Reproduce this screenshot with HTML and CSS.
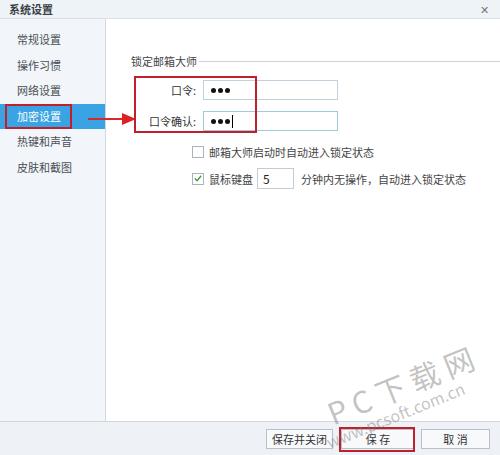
FILE: index.html
```html
<!DOCTYPE html>
<html lang="zh-CN">
<head>
    <meta charset="UTF-8">
    <title>系统设置</title>
    <link rel="stylesheet" href="styles.css">
</head>
<body>
    <div class="dialog">
        <div class="titlebar">
            <span class="title">系统设置</span>
            <span class="close">&#x2715;</span>
        </div>
        <div class="main">
            <ul class="nav">
                <li>常规设置</li>
                <li>操作习惯</li>
                <li>网络设置</li>
                <li class="active">加密设置<span class="mark"></span></li>
                <li>热键和声音</li>
                <li>皮肤和截图</li>
            </ul>
            <svg class="arrow" width="50" height="14" viewBox="0 0 50 14">
                <line x1="0" y1="7" x2="36" y2="7" stroke="#d42a2a" stroke-width="2.2"/>
                <polygon points="34,1 48,7 34,13" fill="#e02020"/>
            </svg>
            <div class="content">
                <div class="group-title"><span>锁定邮箱大师</span></div>
                <div class="fields">
                    <div class="row">
                        <label>口令:</label>
                        <div class="input"><i></i><i></i><i></i></div>
                    </div>
                    <div class="row">
                        <label>口令确认:</label>
                        <div class="input focus"><i></i><i></i><i></i><span class="caret"></span></div>
                    </div>
                    <span class="mark"></span>
                </div>
                <div class="option">
                    <span class="check"></span>
                    <span>邮箱大师启动时自动进入锁定状态</span>
                </div>
                <div class="option">
                    <span class="check on">
                        <svg width="11" height="11" viewBox="0 0 11 11"><path d="M2 5.5 L4.5 8 L9 2.5" fill="none" stroke="#3a9a3a" stroke-width="1.4"/></svg>
                    </span>
                    <span>鼠标键盘</span>
                    <div class="num">5</div>
                    <span>分钟内无操作，自动进入锁定状态</span>
                </div>
            </div>
        </div>
        <div class="footer">
            <button class="btn w1">保存并关闭</button>
            <button class="btn w2">保 存<span class="mark"></span></button>
            <button class="btn w3">取 消</button>
        </div>
        <div class="watermark">
            <div class="big">P C 下 载 网</div>
            <div class="small">www.pcsoft.com.cn</div>
        </div>
    </div>
</body>
</html>
```

FILE: styles.css
```css
* {
    box-sizing: border-box;
}

body {
    margin: 0;
    font-family: "Noto Sans CJK SC", "Noto Sans", sans-serif;
    font-size: 11px;
    color: #333;
    background: #fff;
}

.dialog {
    position: relative;
    width: 500px;
    height: 455px;
    display: flex;
    flex-direction: column;
    overflow: hidden;
}

.titlebar {
    height: 19px;
    flex: none;
    display: flex;
    align-items: center;
    justify-content: space-between;
    padding: 0 11px 0 9px;
    background: #eef3f7;
    border-bottom: 1px solid #d9dfe5;
}

.title {
    font-size: 11px;
    font-weight: bold;
    color: #3a3f45;
    line-height: 1;
}

.close {
    font-size: 11px;
    color: #777;
    line-height: 1;
}

.main {
    position: relative;
    flex: 1;
    display: flex;
    border-bottom: 1px solid #d3d7dc;
}

.nav {
    width: 106px;
    flex: none;
    margin: 0;
    padding: 8px 0 0;
    list-style: none;
    background: #f2f5f9;
    border-right: 1px solid #d3d8de;
}

.nav li {
    position: relative;
    height: 25.5px;
    line-height: 25.5px;
    padding-left: 17px;
    color: #4a4f55;
}

.nav li.active {
    background: #39a3e3;
    color: #fff;
}

.nav li .mark {
    position: absolute;
    left: 5px;
    top: 0;
    width: 67px;
    height: 25px;
    border: 2px solid #c01f2c;
}

.arrow {
    position: absolute;
    left: 88px;
    top: 93px;
}

.content {
    flex: 1;
    padding: 35px 0 0 25px;
}

.group-title {
    display: flex;
    align-items: center;
    height: 14px;
    color: #444;
}

.group-title::after {
    content: '';
    flex: 1;
    height: 1px;
    margin-left: 2px;
    background: #c9d2da;
}

.fields {
    position: relative;
    margin-top: 12px;
    display: flex;
    flex-direction: column;
    gap: 11px;
}

.row {
    display: flex;
    align-items: center;
}

.row label {
    width: 66px;
    text-align: right;
    padding-right: 1px;
    color: #333;
}

.input {
    margin-left: 6px;
    width: 135px;
    height: 20px;
    border: 1px solid #c3d0da;
    padding-left: 7px;
    display: flex;
    align-items: center;
    gap: 2px;
}

.input i {
    width: 5px;
    height: 5px;
    border-radius: 50%;
    background: #111;
}

.input.focus {
    border-color: #9ccbe0;
}

.caret {
    width: 1px;
    height: 13px;
    background: #000;
    margin-left: 0;
}

.fields .mark {
    position: absolute;
    left: 3px;
    top: -4px;
    width: 123px;
    height: 57px;
    border: 2px solid #c01f2c;
}

.option {
    display: flex;
    align-items: center;
    margin-left: 61px;
    color: #444;
}

.fields + .option {
    margin-top: 15px;
    height: 12px;
}

.option + .option {
    margin-top: 10px;
}

.check {
    width: 12px;
    height: 12px;
    border: 1px solid #aab4bd;
    background: #fff;
    margin-right: 5px;
    display: flex;
    align-items: center;
    justify-content: center;
}

.num {
    width: 37px;
    height: 21px;
    margin: 0 7px 0 4px;
    border: 1px solid #c3ccd3;
    padding-left: 5px;
    line-height: 19px;
    font-size: 12px;
    color: #222;
}

.footer {
    height: 33px;
    flex: none;
    display: flex;
    justify-content: flex-end;
    align-items: flex-start;
    padding: 7px 10px 0 0;
    background: #eef2f7;
}

.btn {
    position: relative;
    height: 20px;
    padding: 0;
    border: 1px solid #b8c1ca;
    background: #f7f9fb;
    font: inherit;
    font-size: 11px;
    color: #333;
}

.w1 { width: 67px; }
.w2 { width: 74px; margin-left: 8px; }
.w3 { width: 69px; margin-left: 6px; }

.btn .mark {
    position: absolute;
    left: -3px;
    top: -3px;
    width: 76px;
    height: 25px;
    border: 2px solid #c01f2c;
}

.watermark {
    position: absolute;
    left: 322px;
    top: 398px;
    transform: rotate(-22deg);
    transform-origin: left top;
    color: rgba(120, 120, 120, 0.45);
    pointer-events: none;
}

.watermark .big {
    font-size: 30px;
    line-height: 34px;
    white-space: nowrap;
}

.watermark .small {
    font-size: 16px;
    line-height: 18px;
    margin-left: -12px;
    white-space: nowrap;
}
```
